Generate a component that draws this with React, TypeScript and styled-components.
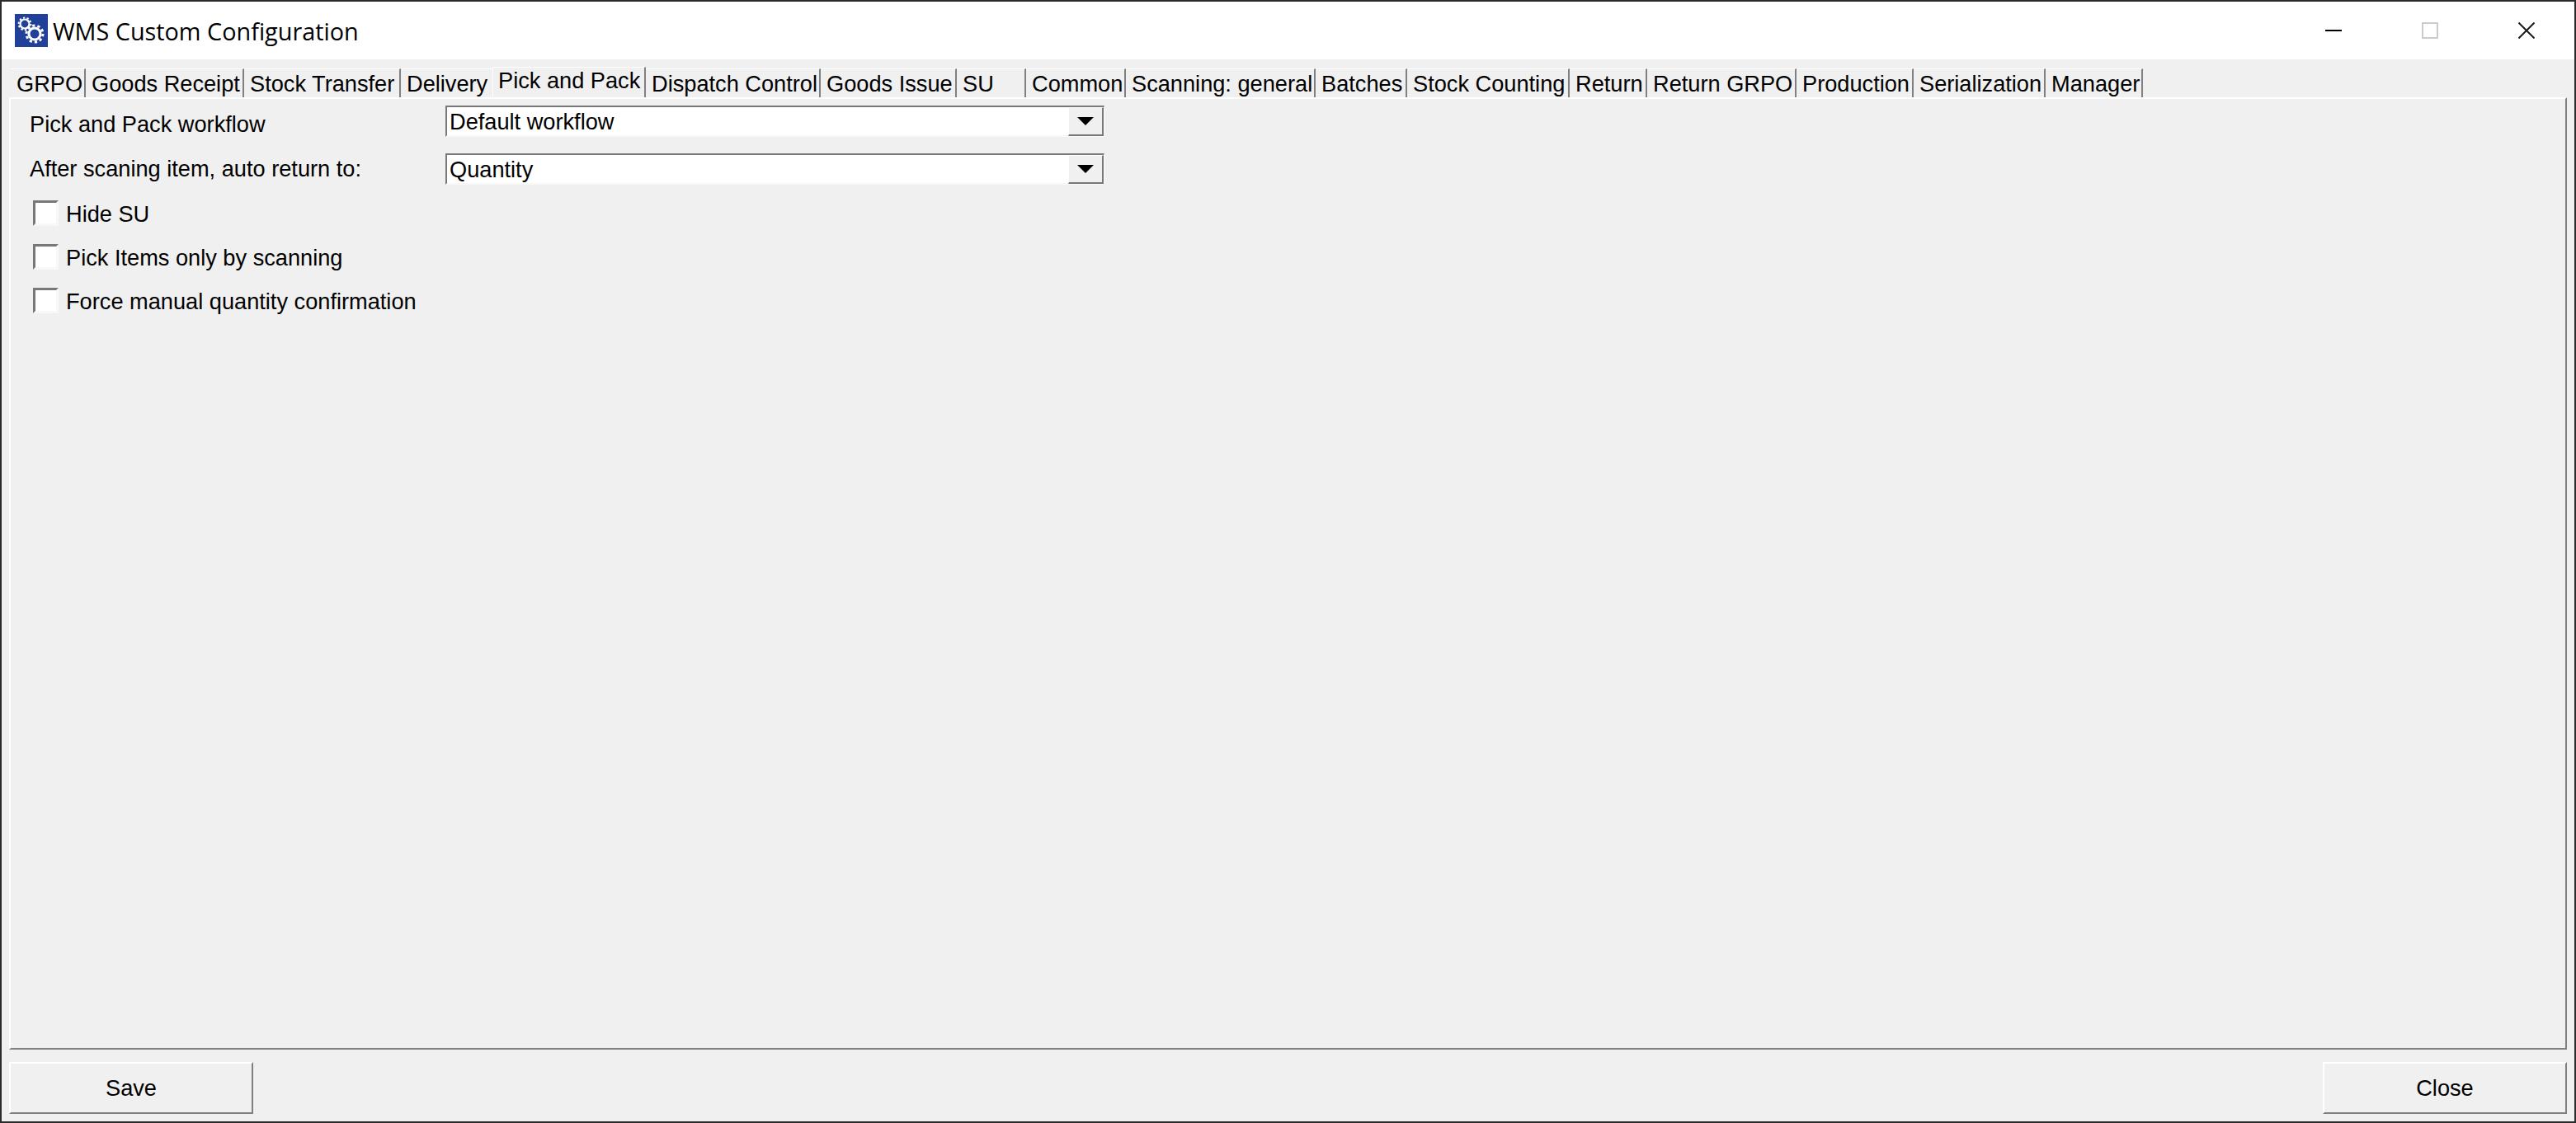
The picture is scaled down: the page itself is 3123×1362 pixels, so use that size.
import React from "react";
import styled, { createGlobalStyle } from "styled-components";

const GlobalStyle = createGlobalStyle`
  html, body {
    margin: 0;
    padding: 0;
    background: #2b2b2b;
  }
`;

const Window = styled.div`
  box-sizing: border-box;
  width: 3123px;
  height: 1362px;
  display: flex;
  flex-direction: column;
  border: 2px solid #2b2b2b;
  background: #f0f0f0;
  font-family: "Liberation Sans", Arial, sans-serif;
  font-size: 27.2px;
  color: #000;
  overflow: hidden;
`;

const TitleBar = styled.div`
  height: 70px;
  flex: none;
  display: flex;
  align-items: center;
  background: #fff;
  padding-left: 16px;
`;

const AppIcon = styled.svg`
  width: 40px;
  height: 40px;
  flex: none;
  margin-right: 6px;
`;

const TitleText = styled.div`
  font-family: "Open Sans", sans-serif;
  font-size: 28.8px;
  color: #000;
  white-space: nowrap;
`;

const WindowControls = styled.div`
  margin-left: auto;
  display: flex;
`;

const ControlCell = styled.div`
  width: 117px;
  height: 70px;
  display: flex;
  align-items: center;
  justify-content: center;
`;

const TabStrip = styled.div`
  flex: none;
  height: 46px;
  display: flex;
  align-items: flex-end;
  padding-left: 11px;
`;

const Tab = styled.div<{ $width: number; $active?: boolean; $beforeActive?: boolean }>`
  box-sizing: border-box;
  width: ${(p) => p.$width}px;
  height: ${(p) => (p.$active ? 37 : 35)}px;
  flex: none;
  padding-left: ${(p) => (p.$active ? 6 : 7)}px;
  white-space: nowrap;
  line-height: ${(p) => (p.$active ? 32 : 36)}px;
  border-top: 1px solid #fff;
  border-left: ${(p) => (p.$active ? "1px solid #fff" : "none")};
  border-right: ${(p) => (p.$beforeActive ? "none" : "2px solid #808080")};
`;

const Page = styled.div`
  flex: 1;
  margin: 0 9px 0 9px;
  border-top: 2px solid #fff;
  border-left: 2px solid #fff;
  border-right: 2px solid #808080;
  border-bottom: 2px solid #808080;
  padding: 8px 0 0 23px;
`;

const FieldRow = styled.div`
  display: flex;
  height: 38px;
  margin-bottom: 20px;
`;

const FieldLabel = styled.div<{ $lineHeight: number }>`
  width: 504px;
  line-height: ${(p) => p.$lineHeight}px;
  white-space: nowrap;
`;

const Combo = styled.div`
  box-sizing: border-box;
  width: 799px;
  height: 38px;
  display: flex;
  background: #fff;
  border-top: 2px solid #787878;
  border-left: 2px solid #787878;
  border-bottom: 2px solid #f8f8f8;
  border-right: 1px solid #fff;
`;

const ComboValue = styled.div`
  flex: 1;
  padding-left: 3px;
  line-height: 36px;
  white-space: nowrap;
`;

const ComboButton = styled.div`
  box-sizing: border-box;
  width: 43px;
  flex: none;
  margin-bottom: -1px;
  display: flex;
  align-items: center;
  justify-content: center;
  background: #f0f0f0;
  border-top: 1px solid #fff;
  border-left: 1px solid #fff;
  border-right: 2px solid #787878;
  border-bottom: 2px solid #787878;
`;

const Arrow = styled.div`
  width: 0;
  height: 0;
  border-left: 10px solid transparent;
  border-right: 10px solid transparent;
  border-top: 10px solid #000;
`;

const CheckGroup = styled.div`
  margin-top: -1px;
`;

const CheckRow = styled.label`
  display: flex;
  align-items: center;
  height: 31px;
  margin: 0 0 22px 4px;
`;

const CheckBox = styled.div`
  box-sizing: border-box;
  width: 31px;
  height: 31px;
  flex: none;
  margin-right: 9px;
  background: #fff;
  border-top: 3px solid #787878;
  border-left: 3px solid #787878;
  border-right: 3px solid #f8f8f8;
  border-bottom: 3px solid #f8f8f8;
`;

const CheckText = styled.span`
  padding-top: 2px;
  white-space: nowrap;
`;

const Footer = styled.div`
  flex: none;
  height: 87px;
  box-sizing: border-box;
  padding: 15px 9px 9px 9px;
  display: flex;
  justify-content: space-between;
`;

const PushButton = styled.div`
  box-sizing: border-box;
  width: 296px;
  height: 63px;
  display: flex;
  align-items: center;
  justify-content: center;
  background: #f0f0f0;
  border-top: 2px solid #fff;
  border-left: 2px solid #fff;
  border-right: 2px solid #808080;
  border-bottom: 2px solid #808080;
`;

const tabs = [
  { label: "GRPO", width: 91 },
  { label: "Goods Receipt", width: 192 },
  { label: "Stock Transfer", width: 190 },
  { label: "Delivery", width: 111, beforeActive: true },
  { label: "Pick and Pack", width: 186, active: true },
  { label: "Dispatch Control", width: 212 },
  { label: "Goods Issue", width: 165 },
  { label: "SU", width: 84 },
  { label: "Common", width: 121 },
  { label: "Scanning: general", width: 230 },
  { label: "Batches", width: 111 },
  { label: "Stock Counting", width: 197 },
  { label: "Return", width: 94 },
  { label: "Return GRPO", width: 181 },
  { label: "Production", width: 142 },
  { label: "Serialization", width: 160 },
  { label: "Manager", width: 118 },
];

const GearIcon = () => (
  <AppIcon viewBox="0 0 40 40">
    <rect width="40" height="40" fill="#21409a" />
    <g stroke="#fff" fill="none">
      <circle cx="12" cy="12" r="5.5" strokeWidth="2.2" />
      <circle cx="12" cy="12" r="7.4" strokeWidth="2" strokeDasharray="2.4 2.25" />
      <circle cx="24" cy="24" r="7" strokeWidth="3" />
      <circle cx="24" cy="24" r="10" strokeWidth="3" strokeDasharray="3.2 3.08" />
    </g>
  </AppIcon>
);

export default function App() {
  return (
    <Window>
      <GlobalStyle />
      <TitleBar>
        <GearIcon />
        <TitleText>WMS Custom Configuration</TitleText>
        <WindowControls>
          <ControlCell>
            <svg width="20" height="20" viewBox="0 0 20 20">
              <rect x="0" y="9" width="20" height="2" fill="#000" />
            </svg>
          </ControlCell>
          <ControlCell>
            <svg width="20" height="20" viewBox="0 0 20 20">
              <rect x="1" y="1" width="18" height="18" fill="none" stroke="#ccc" strokeWidth="2" />
            </svg>
          </ControlCell>
          <ControlCell>
            <svg width="20" height="20" viewBox="0 0 20 20">
              <path d="M0.5 0.5L19.5 19.5M19.5 0.5L0.5 19.5" stroke="#1a1a1a" strokeWidth="2" fill="none" />
            </svg>
          </ControlCell>
        </WindowControls>
      </TitleBar>
      <TabStrip>
        {tabs.map((t) => (
          <Tab key={t.label} $width={t.width} $active={t.active} $beforeActive={t.beforeActive}>
            {t.label}
          </Tab>
        ))}
      </TabStrip>
      <Page>
        <FieldRow>
          <FieldLabel $lineHeight={46}>Pick and Pack workflow</FieldLabel>
          <Combo>
            <ComboValue>Default workflow</ComboValue>
            <ComboButton>
              <Arrow />
            </ComboButton>
          </Combo>
        </FieldRow>
        <FieldRow>
          <FieldLabel $lineHeight={38}>After scaning item, auto return to:</FieldLabel>
          <Combo>
            <ComboValue>Quantity</ComboValue>
            <ComboButton>
              <Arrow />
            </ComboButton>
          </Combo>
        </FieldRow>
        <CheckGroup>
          <CheckRow>
            <CheckBox />
            <CheckText>Hide SU</CheckText>
          </CheckRow>
          <CheckRow>
            <CheckBox />
            <CheckText>Pick Items only by scanning</CheckText>
          </CheckRow>
          <CheckRow>
            <CheckBox />
            <CheckText>Force manual quantity confirmation</CheckText>
          </CheckRow>
        </CheckGroup>
      </Page>
      <Footer>
        <PushButton>Save</PushButton>
        <PushButton>Close</PushButton>
      </Footer>
    </Window>
  );
}
